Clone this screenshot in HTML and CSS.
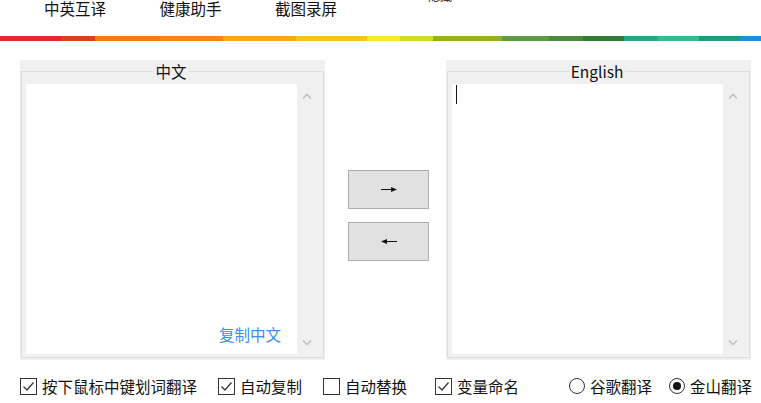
FILE: index.html
```html
<!DOCTYPE html>
<html lang="zh-CN">
<head>
    <meta charset="UTF-8">
    <meta name="viewport" content="width=device-width, initial-scale=1.0">
    <title>翻译助手</title>
    <link rel="stylesheet" href="styles.css">
</head>
<body>

<nav class="tabs">
    <span class="tab">中英互译</span>
    <span class="tab">健康助手</span>
    <span class="tab">截图录屏</span>
    <span class="hide">隐藏</span>
</nav>
<div class="rainbow"></div>

<div class="main">
    <div class="group">
        <fieldset>
            <legend>中文</legend>
            <div class="pane">
                <div class="text cn">
                    <a class="copy">复制中文</a>
                </div>
                <div class="scroll">
                    <svg width="10" height="6" viewBox="0 0 10 6"><polyline points="1,5.5 5,1.5 9,5.5" fill="none" stroke="#c2c2c2" stroke-width="1.6"/></svg>
                    <svg width="10" height="6" viewBox="0 0 10 6"><polyline points="1,0.5 5,4.5 9,0.5" fill="none" stroke="#c2c2c2" stroke-width="1.6"/></svg>
                </div>
            </div>
        </fieldset>
    </div>

    <div class="btns">
        <button class="btn">
            <svg width="16" height="7" viewBox="0 0 16 7"><line x1="0" y1="3.5" x2="11" y2="3.5" stroke="#111" stroke-width="1"/><polygon points="10,1 16,3.5 10,6" fill="#111"/></svg>
        </button>
        <button class="btn">
            <svg width="16" height="7" viewBox="0 0 16 7"><line x1="5" y1="3.5" x2="16" y2="3.5" stroke="#111" stroke-width="1"/><polygon points="6,1 0,3.5 6,6" fill="#111"/></svg>
        </button>
    </div>

    <div class="group right">
        <fieldset>
            <legend>English</legend>
            <div class="pane">
                <div class="text">
                    <span class="caret"></span>
                </div>
                <div class="scroll">
                    <svg width="10" height="6" viewBox="0 0 10 6"><polyline points="1,5.5 5,1.5 9,5.5" fill="none" stroke="#c2c2c2" stroke-width="1.6"/></svg>
                    <svg width="10" height="6" viewBox="0 0 10 6"><polyline points="1,0.5 5,4.5 9,0.5" fill="none" stroke="#c2c2c2" stroke-width="1.6"/></svg>
                </div>
            </div>
        </fieldset>
    </div>
</div>

<div class="opts">
    <label class="opt">
        <span class="box"><svg width="15" height="15" viewBox="0 0 15 15"><polyline points="2.5,7.5 6,11 12.5,3.5" fill="none" stroke="#333" stroke-width="1.2"/></svg></span>
        按下鼠标中键划词翻译
    </label>
    <label class="opt">
        <span class="box"><svg width="15" height="15" viewBox="0 0 15 15"><polyline points="2.5,7.5 6,11 12.5,3.5" fill="none" stroke="#333" stroke-width="1.2"/></svg></span>
        自动复制
    </label>
    <label class="opt">
        <span class="box"></span>
        自动替换
    </label>
    <label class="opt wide">
        <span class="box"><svg width="15" height="15" viewBox="0 0 15 15"><polyline points="2.5,7.5 6,11 12.5,3.5" fill="none" stroke="#333" stroke-width="1.2"/></svg></span>
        变量命名
    </label>

    <div class="radios">
        <label class="opt">
            <span class="radio"></span>
            谷歌翻译
        </label>
        <label class="opt">
            <span class="radio on"></span>
            金山翻译
        </label>
    </div>
</div>

</body>
</html>
```

FILE: styles.css
```css
body {
    margin: 0;
    width: 761px;
    height: 403px;
    overflow: hidden;
    background-color: #fff;
    color: #111;
    font-family: "Noto Sans CJK SC", "Noto Sans", sans-serif;
    font-size: 15.5px;
}

.tabs {
    display: flex;
    align-items: flex-start;
    height: 36px;
    padding-left: 44px;
}
.tab {
    width: 115.5px;
    line-height: 17px;
}
.hide {
    margin-left: 37.5px;
    margin-top: -11px;
    font-size: 12px;
    line-height: 14px;
}

.rainbow {
    height: 5px;
    background: linear-gradient(90deg,
        #e8262a 0, #e8262a 61px,
        #d8441a 61px, #d8441a 95px,
        #f47a14 95px, #f47a14 160px,
        #f6861a 160px, #f6861a 223px,
        #fba614 223px, #fba614 296px,
        #fcc419 296px, #fcc419 367px,
        #f8ea28 367px, #f8ea28 400px,
        #d2dc22 400px, #d2dc22 433px,
        #98b01c 433px, #98b01c 502px,
        #5e9c42 502px, #5e9c42 549px,
        #4c8c3a 549px, #4c8c3a 583px,
        #2e7d34 583px, #2e7d34 624px,
        #2aa684 624px, #2aa684 658px,
        #35bc8c 658px, #35bc8c 699px,
        #1f9c7c 699px, #1f9c7c 740px,
        #1e8ee0 740px);
}

.main {
    display: flex;
    align-items: flex-start;
    margin-top: 19px;
    padding-left: 20px;
}

.group {
    width: 305px;
    box-sizing: border-box;
    padding: 4px 1px 2px 1px;
    background-color: #f0f0f0;
}
.group.right {
    margin-left: 17px;
}
fieldset {
    margin: 0;
    min-width: 0;
    border: 1px solid #dcdcdc;
    padding: 5px 7px 3px 4px;
}
legend {
    margin: 0 auto;
    padding: 0 2px;
    line-height: 15px;
    color: #111;
}

.pane {
    display: flex;
    height: 270px;
}
.text {
    flex: 1;
    background-color: #fff;
}
.text.cn {
    display: flex;
    justify-content: flex-end;
    align-items: flex-end;
}
.copy {
    color: #3b8fe8;
    line-height: 20px;
    padding: 0 16px 10px 0;
    cursor: pointer;
}
.caret {
    display: block;
    width: 1px;
    height: 19px;
    margin: 1px 0 0 4px;
    background-color: #111;
}
.scroll {
    width: 19px;
    display: flex;
    flex-direction: column;
    justify-content: space-between;
    align-items: center;
    padding: 9px 0 8px 0;
    box-sizing: border-box;
}
.scroll svg {
    display: block;
}

.btns {
    display: flex;
    flex-direction: column;
    gap: 13px;
    margin-top: 110px;
    margin-left: 23px;
}
.btn {
    width: 81px;
    height: 39px;
    padding: 0;
    display: flex;
    justify-content: center;
    align-items: center;
    background-color: #e1e1e1;
    border: 1px solid #adadad;
    cursor: pointer;
}

.opts {
    display: flex;
    align-items: center;
    gap: 21px;
    height: 20px;
    margin-top: 16px;
    padding: 0 9px 0 20px;
}
.opt {
    display: flex;
    align-items: center;
    gap: 5px;
    line-height: 20px;
    white-space: nowrap;
}
.opt.wide {
    margin-left: 7px;
}
.box {
    width: 15px;
    height: 15px;
    border: 1px solid #333;
    background-color: #fff;
}
.box svg {
    display: block;
}
.radios {
    display: flex;
    gap: 17px;
    margin-left: auto;
}
.radio {
    width: 14px;
    height: 14px;
    border: 1px solid #333;
    border-radius: 50%;
    display: flex;
    justify-content: center;
    align-items: center;
}
.radio.on::after {
    content: "";
    width: 8px;
    height: 8px;
    border-radius: 50%;
    background-color: #111;
}
```
